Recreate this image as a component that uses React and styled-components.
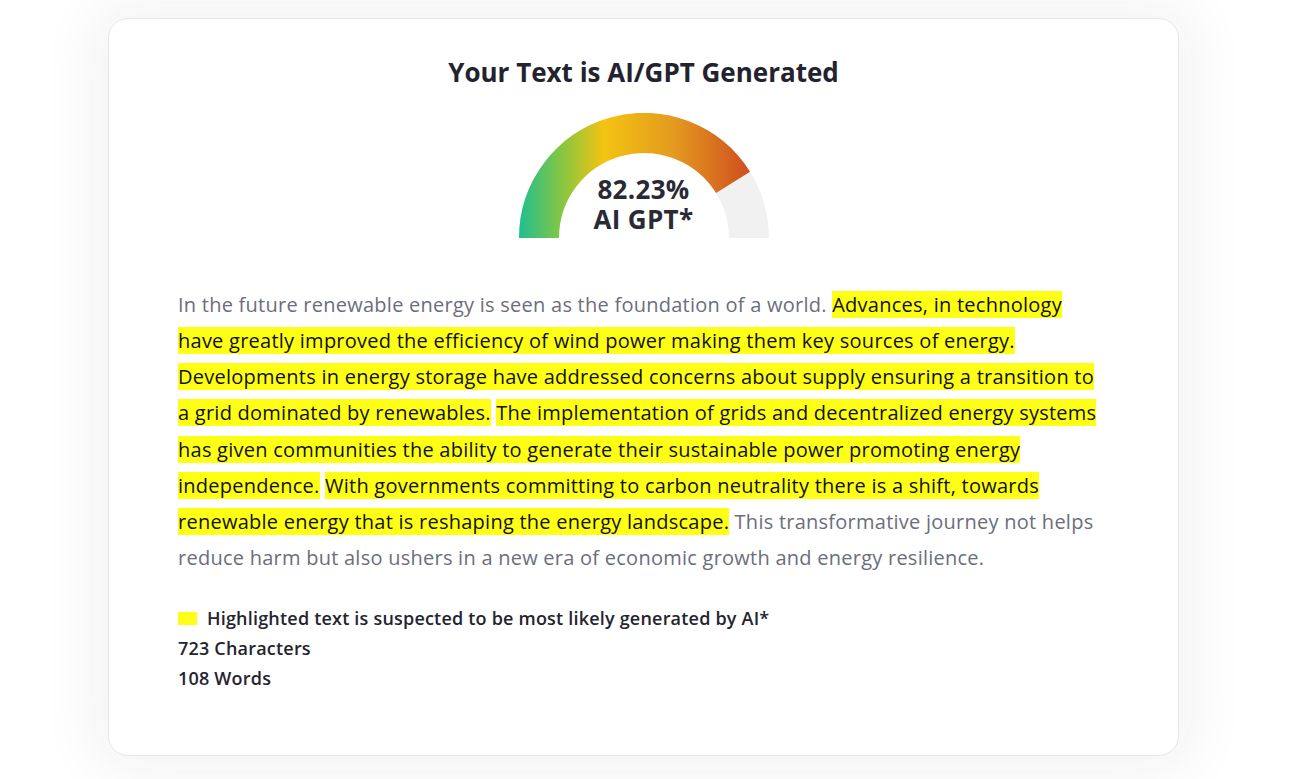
import styled, { createGlobalStyle } from 'styled-components';

const GlobalStyle = createGlobalStyle`
  html, body {
    margin: 0;
    padding: 0;
    background: #ffffff;
  }
  body {
    font-family: "Open Sans", "Noto Sans", sans-serif;
  }
`;

const Page = styled.div`
  padding: 18px 130px 23px 108px;
`;

const Card = styled.div`
  box-sizing: border-box;
  height: 738px;
  background: #ffffff;
  border: 1px solid #e6e6ee;
  border-radius: 20px;
  box-shadow: 0 0 60px 14px rgba(30, 30, 60, 0.06);
  padding: 29px 69px 0;
  display: flex;
  flex-direction: column;
  align-items: center;
`;

const Title = styled.h2`
  margin: 0;
  font-size: 26px;
  line-height: 48px;
  font-weight: 700;
  color: #23232f;
`;

const Gauge = styled.div`
  position: relative;
  width: 250px;
  height: 125px;
  margin-top: 17px;
`;

const GaugeLabel = styled.div`
  position: absolute;
  left: 0;
  right: 0;
  bottom: 4px;
  text-align: center;
  font-size: 26px;
  line-height: 30px;
  font-weight: 700;
  letter-spacing: 0.3px;
  color: #2a2a36;
`;

const Paragraph = styled.p`
  align-self: stretch;
  margin: 49px 0 0;
  font-size: 20px;
  line-height: 36.15px;
  letter-spacing: 0.25px;
  color: #6b6e7c;
`;

const Mark = styled.span`
  background: #ffff16;
  color: #111111;
`;

const Stats = styled.div`
  align-self: stretch;
  margin-top: 27px;
  display: flex;
  flex-direction: column;
`;

const StatRow = styled.div`
  display: flex;
  align-items: center;
  gap: 10px;
  font-size: 18px;
  line-height: 30px;
  font-weight: 600;
  letter-spacing: 0.2px;
  color: #24242f;
`;

const Swatch = styled.span`
  width: 19px;
  height: 13px;
  background: #ffff16;
`;

const value = 82.23;

const GaugeArc = () => {
  const cx = 125;
  const cy = 125;
  const r = 105;
  const a = Math.PI * (1 - value / 100);
  const ex = cx + r * Math.cos(a);
  const ey = cy - r * Math.sin(a);
  return (
    <svg width="250" height="125" viewBox="0 0 250 125">
      <defs>
        <linearGradient id="gaugeFill" gradientUnits="userSpaceOnUse" x1="0" y1="0" x2="250" y2="0">
          <stop offset="0" stopColor="#1fbf8f" />
          <stop offset="0.18" stopColor="#8cc63e" />
          <stop offset="0.34" stopColor="#f4c312" />
          <stop offset="0.62" stopColor="#e39a1f" />
          <stop offset="0.92" stopColor="#d04e20" />
        </linearGradient>
      </defs>
      <path
        d={`M ${cx - r} ${cy} A ${r} ${r} 0 0 1 ${cx + r} ${cy}`}
        fill="none"
        stroke="#f1f1f1"
        strokeWidth="40"
      />
      <path
        d={`M ${cx - r} ${cy} A ${r} ${r} 0 0 1 ${ex} ${ey}`}
        fill="none"
        stroke="url(#gaugeFill)"
        strokeWidth="40"
      />
    </svg>
  );
};

export default function App() {
  return (
    <>
      <GlobalStyle />
      <Page>
        <Card>
          <Title>Your Text is AI/GPT Generated</Title>
          <Gauge>
            <GaugeArc />
            <GaugeLabel>
              {value}%
              <br />
              AI GPT*
            </GaugeLabel>
          </Gauge>
          <Paragraph>
            In the future renewable energy is seen as the foundation of a world.{' '}
            <Mark>
              Advances, in technology have greatly improved the efficiency of wind power making them key
              sources of energy.
            </Mark>{' '}
            <Mark>
              Developments in energy storage have addressed concerns about supply ensuring a transition to a
              grid dominated by renewables.
            </Mark>{' '}
            <Mark>
              The implementation of grids and decentralized energy systems has given communities the ability
              to generate their sustainable power promoting energy independence.
            </Mark>{' '}
            <Mark>
              With governments committing to carbon neutrality there is a shift, towards renewable energy that
              is reshaping the energy landscape.
            </Mark>{' '}
            This transformative journey not helps reduce harm but also ushers in a new era of economic growth
            and energy resilience.
          </Paragraph>
          <Stats>
            <StatRow>
              <Swatch />
              Highlighted text is suspected to be most likely generated by AI*
            </StatRow>
            <StatRow>723 Characters</StatRow>
            <StatRow>108 Words</StatRow>
          </Stats>
        </Card>
      </Page>
    </>
  );
}
